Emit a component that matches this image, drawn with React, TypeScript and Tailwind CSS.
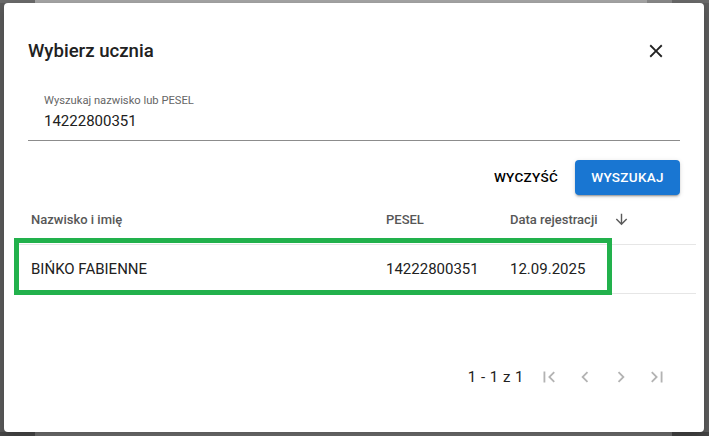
import React from "react";

const Icon = ({ d, className }: { d: string; className?: string }) => (
  <svg viewBox="0 0 24 24" className={className} fill="currentColor">
    <path d={d} />
  </svg>
);

const paths = {
  close:
    "M19 6.41L17.59 5 12 10.59 6.41 5 5 6.41 10.59 12 5 17.59 6.41 19 12 13.41 17.59 19 19 17.59 13.41 12z",
  down: "M20 12l-1.41-1.41L13 16.17V4h-2v12.17l-5.58-5.59L4 12l8 8 8-8z",
  first: "M18.41 16.59L13.82 12l4.59-4.59L17 6l-6 6 6 6zM6 6h2v12H6z",
  prev: "M15.41 7.41L14 6l-6 6 6 6 1.41-1.41L10.83 12z",
  next: "M10 6L8.59 7.41 13.17 12l-4.58 4.59L10 18l6-6z",
  last: "M5.59 7.41L10.18 12l-4.59 4.59L7 18l6-6-6-6zM16 6h2v12h-2z",
};

const rows = [{ name: "BIŃKO FABIENNE", pesel: "14222800351", date: "12.09.2025" }];

export default function App() {
  return (
    <div className="w-[709px] h-[436px] flex flex-col bg-[#5c5c5c] overflow-hidden font-['Roboto',sans-serif]">
      {/* page behind the dialog */}
      <div className="h-[3px] flex shrink-0">
        <div className="w-[35px] bg-[#6b6b6b]" />
        <div className="flex-1 bg-[#a7a7a7]" />
        <div className="w-[25px] bg-[#8a8a8a]" />
        <div className="w-[37px] bg-[#6a6a6a]" />
      </div>

      <div className="flex h-[429px] shrink-0">
        <div className="w-[4px] bg-[#5c5c5c]" />

        <div className="relative w-[700px] h-[429px] bg-white rounded-[4px] shadow-[0_4px_12px_rgba(0,0,0,0.25)] flex flex-col">
          {/* title */}
          <div className="flex items-center justify-between pt-[32px] pl-[24px] pr-[37px]">
            <h2 className="h-[32px] leading-[32px] text-[18.6px] font-medium text-[#212121]">Wybierz ucznia</h2>
            <Icon d={paths.close} className="w-[22px] h-[22px] text-[#222]" />
          </div>

          {/* search field */}
          <div className="mx-[24px] mt-[27px] pl-[16px] pb-[9px] border-b border-[#8c8c8c] flex flex-col">
            <span className="h-[14px] leading-[14px] text-[11.2px] text-[#666]">Wyszukaj nazwisko lub PESEL</span>
            <span className="mt-[3px] h-[20px] leading-[20px] text-[15px] text-[#212121]">14222800351</span>
          </div>

          {/* actions */}
          <div className="flex justify-end items-center gap-[9px] mt-[19px] pr-[24px]">
            <button className="h-[35px] px-[8px] text-[13.5px] font-medium tracking-[0.3px] text-black">WYCZYŚĆ</button>
            <button className="h-[35px] w-[105px] rounded-[4px] bg-[#1976d2] text-white text-[13.5px] font-medium tracking-[0.3px] shadow-[0_3px_1px_-2px_rgba(0,0,0,0.2),0_2px_2px_0_rgba(0,0,0,0.14),0_1px_5px_0_rgba(0,0,0,0.12)]">
              WYSZUKAJ
            </button>
          </div>

          {/* table */}
          <div className="mx-[10px] w-[682px]">
            <div className="grid grid-cols-[355px_124px_1fr] h-[50px] items-center border-b border-[#e6e6e6] text-[13px] font-medium text-[#575757]">
              <span className="pl-[17px]">Nazwisko i imię</span>
              <span className="pl-[17px]">PESEL</span>
              <span className="pl-[17px] flex items-center">
                Data rejestracji
                <Icon d={paths.down} className="ml-[16px] w-[17px] h-[17px] text-[#5a5a5a]" />
              </span>
            </div>
            {rows.map((r) => (
              <div
                key={r.pesel}
                className="grid grid-cols-[355px_124px_1fr] h-[49px] items-center border-b border-[#e6e6e6] text-[15px] text-[#212121]"
              >
                <span className="pl-[17px]">{r.name}</span>
                <span className="pl-[17px]">{r.pesel}</span>
                <span className="pl-[17px]">{r.date}</span>
              </div>
            ))}
          </div>

          {/* pagination */}
          <div className="flex items-center justify-end h-[52px] mt-[57px] pr-[29px]">
            <span className="text-[15px] tracking-[0.5px] text-[#212121] mr-[7px]">1 - 1 z 1</span>
            {[paths.first, paths.prev, paths.next, paths.last].map((d, i) => (
              <span key={i} className="w-[36px] h-[36px] flex items-center justify-center">
                <Icon d={d} className="w-[22px] h-[22px] text-[#b3b3b3]" />
              </span>
            ))}
          </div>

          {/* highlight annotation */}
          <div className="absolute left-[10px] top-[235px] w-[598px] h-[57px] border-[5px] border-[#22b14c]" />
        </div>

        <div className="flex-1 bg-[#5e5e5e]" />
      </div>

      <div className="flex-1 flex">
        <div className="w-[35px] bg-[#484848]" />
        <div className="flex-1 bg-[#717171]" />
        <div className="w-[37px] bg-[#454545]" />
      </div>
    </div>
  );
}
